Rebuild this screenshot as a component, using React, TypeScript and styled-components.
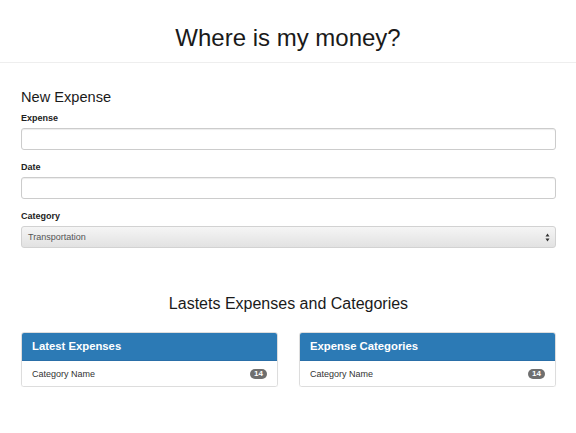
import styled, { createGlobalStyle } from "styled-components";

const GlobalStyle = createGlobalStyle`
  body {
    margin: 0;
    background: #ffffff;
    font-family: "Liberation Sans", Arial, sans-serif;
    color: #333333;
  }
`;

const Header = styled.header`
  height: 62px;
  border-bottom: 1px solid #eeeeee;
  display: flex;
  align-items: center;
  justify-content: center;
  h1 {
    margin: 0;
    font-size: 24px;
    font-weight: 400;
    color: #1a1a1a;
    padding-top: 13px;
  }
`;

const Container = styled.main`
  padding: 0 20px 0 21px;
`;

const FormTitle = styled.h2`
  margin: 26px 0 7px;
  font-size: 14.6px;
  line-height: 17px;
  font-weight: 400;
  color: #1a1a1a;
`;

const Field = styled.div`
  display: flex;
  flex-direction: column;
  margin-bottom: 12px;
`;

const Label = styled.label`
  font-size: 9px;
  line-height: 10px;
  font-weight: 700;
  color: #222;
  margin-bottom: 5px;
`;

const Input = styled.input`
  box-sizing: border-box;
  height: 22px;
  border: 1px solid #cccccc;
  border-radius: 3px;
  box-shadow: inset 0 1px 1px rgba(0, 0, 0, 0.075);
  padding: 0 6px;
  font-family: inherit;
  font-size: 10px;
`;

const SelectBox = styled.div`
  box-sizing: border-box;
  height: 22px;
  border: 1px solid #d2d2d2;
  border-radius: 3px;
  background: linear-gradient(#f5f5f5, #e2e2e2);
  display: flex;
  align-items: center;
  padding: 0 5px 0 6px;
  font-size: 9px;
  color: #555;
`;

const Arrows = styled.svg`
  margin-left: auto;
`;

const SectionTitle = styled.h3`
  margin: 47px 0 19px;
  text-align: center;
  font-size: 16px;
  line-height: 18px;
  font-weight: 400;
  color: #1a1a1a;
`;

const Panels = styled.div`
  display: grid;
  grid-template-columns: 1fr 1fr;
  gap: 21px;
`;

const Panel = styled.section`
  border: 1px solid #dddddd;
  border-radius: 3px;
  overflow: hidden;
  box-shadow: 0 1px 1px rgba(0, 0, 0, 0.05);
`;

const PanelHeading = styled.div`
  background: #2c7ab5;
  color: #fff;
  height: 29px;
  margin: -1px -1px 0;
  border-bottom: 1px solid #2a6fa8;
  box-sizing: border-box;
  display: flex;
  align-items: center;
  padding: 0 11px;
  font-size: 11.3px;
  font-weight: 700;
`;

const Row = styled.div`
  background: #fff;
  height: 25px;
  display: flex;
  align-items: center;
  justify-content: space-between;
  padding: 0 10px;
  font-size: 9px;
  color: #333;
`;

const Badge = styled.span`
  background: #6f6f6f;
  color: #fff;
  font-size: 8px;
  line-height: 10px;
  font-weight: 700;
  border-radius: 5px;
  padding: 0 4px;
  min-width: 9px;
  text-align: center;
`;

const ListPanel = ({ title }: { title: string }) => (
  <Panel>
    <PanelHeading>{title}</PanelHeading>
    <Row>
      Category Name
      <Badge>14</Badge>
    </Row>
  </Panel>
);

export default function App() {
  return (
    <>
      <GlobalStyle />
      <Header>
        <h1>Where is my money?</h1>
      </Header>
      <Container>
        <FormTitle>New Expense</FormTitle>
        <Field>
          <Label>Expense</Label>
          <Input />
        </Field>
        <Field>
          <Label>Date</Label>
          <Input />
        </Field>
        <Field>
          <Label>Category</Label>
          <SelectBox>
            Transportation
            <Arrows width="5" height="9" viewBox="0 0 5 9">
              <path d="M2.5 0.5 L4.5 3.5 L0.5 3.5 Z M2.5 8.5 L4.5 5.5 L0.5 5.5 Z" fill="#333" />
            </Arrows>
          </SelectBox>
        </Field>
        <SectionTitle>Lastets Expenses and Categories</SectionTitle>
        <Panels>
          <ListPanel title="Latest Expenses" />
          <ListPanel title="Expense Categories" />
        </Panels>
      </Container>
    </>
  );
}
